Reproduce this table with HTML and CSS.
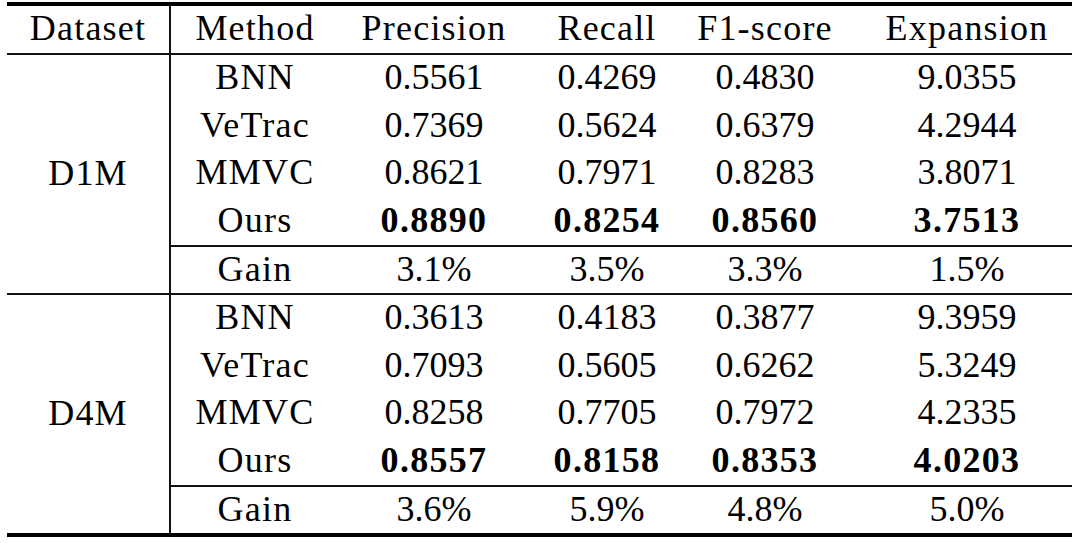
FILE: index.html
```html
<!DOCTYPE html>
<html>
<head>
<meta charset="utf-8">
<link rel="stylesheet" href="styles.css">
</head>
<body>
<table class="results">
  <colgroup>
    <col class="c-dataset">
    <col class="c-method">
    <col class="c-prec">
    <col class="c-rec">
    <col class="c-f1">
    <col class="c-exp">
  </colgroup>
  <thead>
    <tr>
      <th class="ds">Dataset</th>
      <th>Method</th>
      <th>Precision</th>
      <th>Recall</th>
      <th>F1-score</th>
      <th class="exp">Expansion</th>
    </tr>
  </thead>
  <tbody>
    <tr class="first">
      <td class="ds label" rowspan="5">D1M</td>
      <td class="label">BNN</td><td>0.5561</td><td>0.4269</td><td>0.4830</td><td class="exp">9.0355</td>
    </tr>
    <tr><td class="label">VeTrac</td><td>0.7369</td><td>0.5624</td><td>0.6379</td><td class="exp">4.2944</td></tr>
    <tr><td class="label">MMVC</td><td>0.8621</td><td>0.7971</td><td>0.8283</td><td class="exp">3.8071</td></tr>
    <tr><td class="label">Ours</td><td class="best">0.8890</td><td class="best">0.8254</td><td class="best">0.8560</td><td class="exp best">3.7513</td></tr>
    <tr class="gain"><td class="label">Gain</td><td>3.1%</td><td>3.5%</td><td>3.3%</td><td class="exp">1.5%</td></tr>
  </tbody>
  <tbody class="section">
    <tr class="first">
      <td class="ds label" rowspan="5">D4M</td>
      <td class="label">BNN</td><td>0.3613</td><td>0.4183</td><td>0.3877</td><td class="exp">9.3959</td>
    </tr>
    <tr><td class="label">VeTrac</td><td>0.7093</td><td>0.5605</td><td>0.6262</td><td class="exp">5.3249</td></tr>
    <tr><td class="label">MMVC</td><td>0.8258</td><td>0.7705</td><td>0.7972</td><td class="exp">4.2335</td></tr>
    <tr><td class="label">Ours</td><td class="best">0.8557</td><td class="best">0.8158</td><td class="best">0.8353</td><td class="exp best">4.0203</td></tr>
    <tr class="gain"><td class="label">Gain</td><td>3.6%</td><td>5.9%</td><td>4.8%</td><td class="exp">5.0%</td></tr>
  </tbody>
</table>
</body>
</html>
```

FILE: styles.css
```css
html, body {
  margin: 0;
  padding: 0;
  background: #ffffff;
}

body {
  padding: 2px 8px 0 7px;
}

.results {
  width: 1065px;
  table-layout: fixed;
  border-collapse: separate;
  border-spacing: 0;
  font-family: "Liberation Serif", "Times New Roman", serif;
  font-size: 36px;
  color: #000;
  border-top: 4px solid #000;
  border-bottom: 4px solid #000;
}

.c-dataset { width: 164px; }
.c-method { width: 168px; }
.c-prec { width: 190px; }
.c-rec { width: 156px; }
.c-f1 { width: 160px; }
.c-exp { width: 227px; }

.results th,
.results td {
  padding: 0 0 3px 0;
  height: 44.5px;
  text-align: center;
  vertical-align: middle;
  font-weight: normal;
  line-height: 1;
}

.results th {
  height: 43px;
  padding-bottom: 4px;
  border-bottom: 2px solid #111;
  letter-spacing: 1.2px;
}

.results .label {
  letter-spacing: 1.2px;
}

.results .ds {
  border-right: 2px solid #111;
}

.results .exp {
  padding-left: 17px;
}

.results .best {
  font-weight: bold;
  letter-spacing: 1.3px;
}

.results tr.gain td {
  height: 43px;
  border-top: 2px solid #111;
}

.results .section tr.first td {
  border-top: 2px solid #111;
}
```
